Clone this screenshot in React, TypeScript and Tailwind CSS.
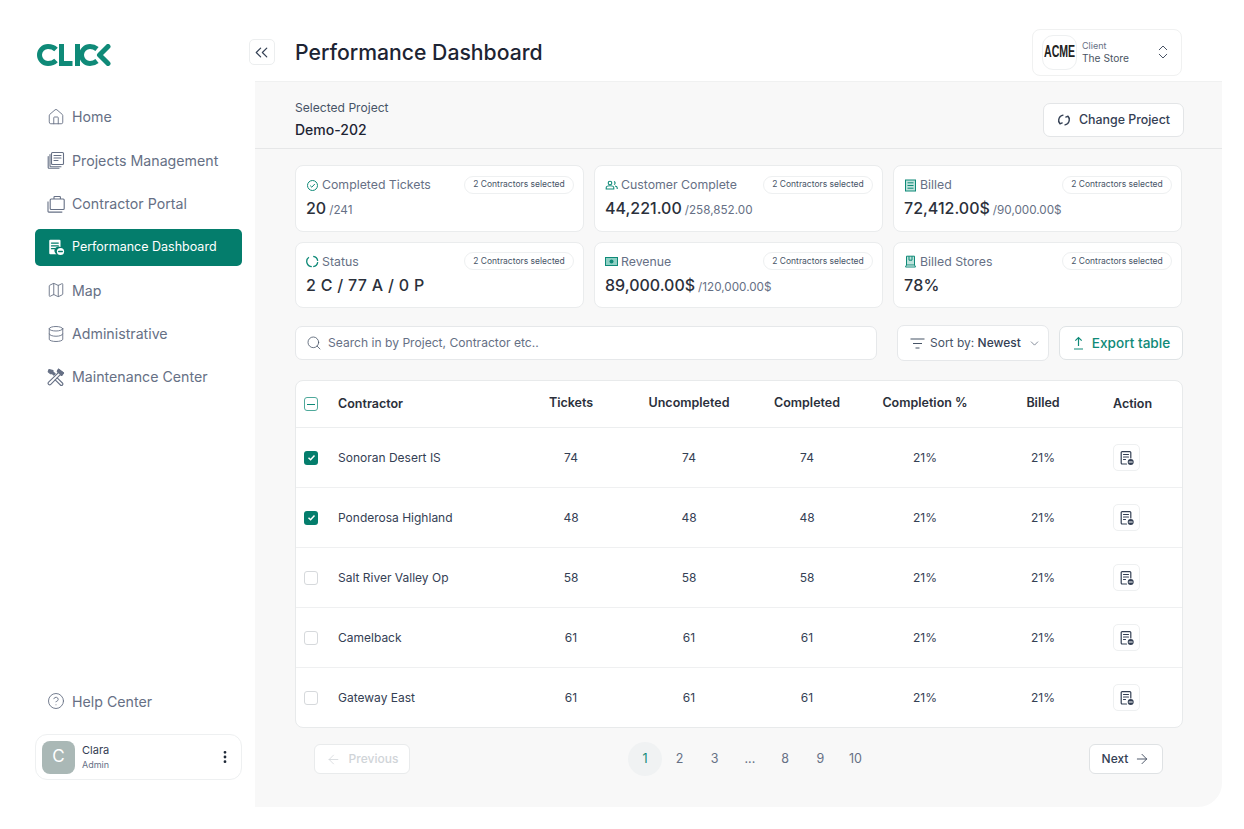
import { ChevronDown, ChevronsUpDown, ArrowLeft, ArrowRight, Search, House, Map, Database, CircleHelp, MoreVertical, ChevronsLeft } from 'lucide-react';
import type { ReactNode } from 'react';

const Doc = ({ size = 16, filled = false }: { size?: number; filled?: boolean }) => (
  <svg width={size} height={size} viewBox="0 0 16 16" fill="none" stroke="currentColor" strokeWidth={1.2} strokeLinecap="round">
    {filled ? (
      <>
        <path d="M2 2.5a1 1 0 0 1 1-1h8a1 1 0 0 1 1 1V8a3.5 3.5 0 0 0-3.5 6.5H3a1 1 0 0 1-1-1z" fill="currentColor" stroke="none" />
        <path d="M4 4.5h6M4 7h6M4 9.5h3" stroke="#047d6c" />
        <circle cx="12" cy="12" r="3.2" fill="currentColor" stroke="none" />
        <path d="M10.4 12h3.2" stroke="#047d6c" />
      </>
    ) : (
      <>
        <path d="M7.5 14H3.2a1 1 0 0 1-1-1V2.6a1 1 0 0 1 1-1h7.6a1 1 0 0 1 1 1V8" />
        <path d="M4.5 4.5h5M4.5 7h5M4.5 9.5h2" />
        <circle cx="11.7" cy="12" r="3" fill="currentColor" stroke="none" />
        <path d="M10.2 12h3" stroke="#fff" />
      </>
    )}
  </svg>
);

const Papers = () => (
  <svg width="18" height="18" viewBox="0 0 18 18" fill="none" stroke="currentColor" strokeWidth={1.1} strokeLinejoin="round" strokeLinecap="round">
    <rect x="4.5" y="1.5" width="12" height="12" rx="1" />
    <path d="M7 4.5h7M7 7h7M7 9.5h4" />
    <path d="M3 3.5v11.5a.8.8 0 0 0 .8.8H14" />
    <path d="M1.2 5.5v11a.8.8 0 0 0 .8.8h10" />
  </svg>
);

const Cases = () => (
  <svg width="18" height="18" viewBox="0 0 18 18" fill="none" stroke="currentColor" strokeWidth={1.1} strokeLinejoin="round">
    <rect x="3.2" y="4" width="14" height="10.5" rx="1" />
    <path d="M7 4V2.2a.7.7 0 0 1 .7-.7h5a.7.7 0 0 1 .7.7V4" />
    <path d="M1 6.5v9.8a.8.8 0 0 0 .8.8h13.5" />
  </svg>
);

const Tools = () => (
  <svg width="18" height="18" viewBox="0 0 18 18" fill="none" stroke="currentColor" strokeWidth={1.1} strokeLinejoin="round" strokeLinecap="round">
    <path d="M2 1.5 1.2 3.8l2.4 2 1.4-.4 1.8 1.8 1.4-1.4L6 4 6 2.6z" fill="currentColor" />
    <path d="M10.2 9.8l5.2 5.2a1.4 1.4 0 0 1-2 2l-5.2-5.2" />
    <path d="M11.5 1.2l5 3.8-1.8 2.4-1.4-.8L3.8 16.4a1.4 1.4 0 0 1-2.2-2.2l9.8-9.6-1.1-1.4z" />
    <path d="M11.5 1.2l5 3.8-1.8 2.4-3.3-2.8-1.1-1.4z" fill="currentColor" />
  </svg>
);

const nav: { label: string; icon: ReactNode; active?: boolean }[] = [
  { label: 'Home', icon: <House size={18} strokeWidth={1.2} /> },
  { label: 'Projects Management', icon: <Papers /> },
  { label: 'Contractor Portal', icon: <Cases /> },
  { label: 'Performance Dashboard', icon: <Doc filled size={18} />, active: true },
  { label: 'Map', icon: <Map size={18} strokeWidth={1.2} /> },
  { label: 'Administrative', icon: <Database size={18} strokeWidth={1.2} /> },
  { label: 'Maintenance Center', icon: <Tools /> },
];

const teal = '#0f8a78';

const statIcons: Record<string, ReactNode> = {
  check: (
    <svg width="13" height="13" viewBox="0 0 13 13" fill="none" stroke={teal} strokeWidth={1}>
      <circle cx="6.5" cy="6.5" r="5" />
      <path d="M4.2 6.6 5.8 8.2 8.8 5" />
    </svg>
  ),
  people: (
    <svg width="13" height="13" viewBox="0 0 13 13" fill="none" stroke={teal} strokeWidth={1.1}>
      <circle cx="5" cy="4" r="1.8" />
      <path d="M9 2.4a1.7 1.7 0 0 1 0 3.2M1.2 10v-1.2c0-1.2 1.4-2 3.8-2s3.8.8 3.8 2V10zM10 7c1.4.2 2.2.9 2.2 1.8V10" />
    </svg>
  ),
  ring: (
    <svg width="13" height="13" viewBox="0 0 13 13" fill="none" stroke={teal} strokeWidth={1.3}>
      <path d="M7.2 1.3a5.2 5.2 0 0 1 4.5 4.5M11.7 7.2a5.2 5.2 0 0 1-4.5 4.5M5.8 11.7a5.2 5.2 0 0 1-2.9-9.4" />
    </svg>
  ),
  cash: (
    <svg width="13" height="13" viewBox="0 0 13 13" fill="none">
      <rect x="0.5" y="2.5" width="12" height="8" fill="#8fd0c4" stroke={teal} />
      <circle cx="6.5" cy="6.5" r="2" fill={teal} />
    </svg>
  ),
  sheet: (
    <svg width="13" height="13" viewBox="0 0 13 13" fill="none" stroke={teal} strokeWidth={1}>
      <rect x="1.5" y="1" width="10" height="11" fill="#bfe3dc" />
      <path d="M3.5 3.8h6M3.5 6.5h6M3.5 9.2h6" />
    </svg>
  ),
  book: (
    <svg width="13" height="13" viewBox="0 0 13 13" fill="none" stroke={teal} strokeWidth={1}>
      <path d="M2.5 10V1.2h8V10z" fill="#bfe3dc" />
      <path d="M2.5 10 1.5 12h10l-1-2M5 1.2v4h3v-4" />
    </svg>
  ),
};

const stats = [
  { title: 'Completed Tickets', icon: 'check', value: '20', total: '/241' },
  { title: 'Customer Complete', icon: 'people', value: '44,221.00', total: '/258,852.00' },
  { title: 'Billed', icon: 'sheet', value: '72,412.00$', total: '/90,000.00$' },
  { title: 'Status', icon: 'ring', value: '2 C / 77 A / 0 P', total: '' },
  { title: 'Revenue', icon: 'cash', value: '89,000.00$', total: '/120,000.00$' },
  { title: 'Billed Stores', icon: 'book', value: '78%', total: '' },
];

const rows = [
  { name: 'Sonoran Desert IS', n: 74, checked: true },
  { name: 'Ponderosa Highland', n: 48, checked: true },
  { name: 'Salt River Valley Op', n: 58, checked: false },
  { name: 'Camelback', n: 61, checked: false },
  { name: 'Gateway East', n: 61, checked: false },
];

const cols = 'grid grid-cols-[42px_174px_118px_118px_118px_118px_118px_1fr] items-center';

export default function App() {
  return (
    <div className="w-[1244px] h-[829px] bg-white p-[22px] flex font-['Inter',sans-serif] overflow-hidden">
      <aside className="w-[233px] shrink-0 flex flex-col pl-[13px] pr-[13px] pb-[27px]">
        <svg width="75" height="22" viewBox="0 0 75 22" fill="none" stroke="#0f8a78" strokeWidth={5} className="mt-[22px] ml-[2px]">
          <path d="M19 5.5Q16 2.5 11 2.5a8.5 8.5 0 0 0 0 17q5 0 8-3" />
          <path d="M24.5 0v19.5h11" />
          <path d="M40.5 0v22" />
          <path d="M60 5Q57 2.5 53 2.5a8.5 8.5 0 0 0 0 17q4 0 7-2.5" />
          <path d="M71 2.5 62.5 11l8.5 8.5" strokeLinecap="round" strokeLinejoin="round" />
        </svg>
        <nav className="mt-[32.5px] flex flex-col gap-[6.35px]">
          {nav.map((item) => (
            <div
              key={item.label}
              className={`h-[37px] flex items-center rounded-[5px] pl-[12px] ${item.active ? 'bg-[#047d6c] text-white text-[12.5px]' : 'text-[#667085] text-[14.2px]'}`}
            >
              <span className="w-[25px] flex shrink-0">{item.icon}</span>
              {item.label}
            </div>
          ))}
        </nav>
        <div className="mt-auto flex items-center pl-[12px] text-[14.2px] text-[#667085]">
          <span className="w-[25px] flex shrink-0"><CircleHelp size={18} strokeWidth={1.2} /></span>
          Help Center
        </div>
        <div className="mt-[22px] h-[46px] border border-[#eef0f1] rounded-[12px] flex items-center pl-[6px] pr-[8px]">
          <div className="w-[33px] h-[33px] rounded-[8px] bg-[#aab8b6] text-white text-[17px] flex items-center justify-center">C</div>
          <div className="ml-[7px] flex-1 leading-none">
            <div className="text-[11px] text-[#344054]">Clara</div>
            <div className="text-[9px] text-[#667085] mt-[4px]">Admin</div>
          </div>
          <MoreVertical size={16} className="text-[#1f2937]" strokeWidth={2.2} />
        </div>
      </aside>

      <main className="flex-1 relative bg-[#f8f8f8] rounded-br-[24px] flex flex-col">
        <button className="absolute left-[-6px] top-[17px] w-[26px] h-[26px] bg-white border border-[#eceeef] rounded-[5px] flex items-center justify-center text-[#344054]">
          <ChevronsLeft size={21} strokeWidth={1.4} className="-ml-[1px]" />
        </button>

        <header className="h-[60px] bg-white border-b border-[#f0f1f1] flex items-center pl-[40px] pr-[40px] justify-between shrink-0">
          <h1 className="text-[21.2px] font-medium text-[#1d2433] mt-[3px]">Performance Dashboard</h1>
          <div className="w-[150px] h-[47px] mt-[1px] border border-[#f0f1f1] rounded-[8px] flex items-center pl-[9px] pr-[9px]">
            <div className="w-[35px] h-[35px] shrink-0 rounded-[11px] border border-[#eef0f1] flex items-center justify-center overflow-hidden">
              <span className="font-['Liberation_Sans',sans-serif] font-bold text-[16px] scale-x-[0.66] text-[#222]">ACME</span>
            </div>
            <div className="ml-[5px] flex-1 leading-none">
              <div className="text-[9px] text-[#667085]">Client</div>
              <div className="text-[10.2px] text-[#4b5563] mt-[3px]">The Store</div>
            </div>
            <ChevronsUpDown size={18} strokeWidth={1.2} className="text-[#344054] -ml-[1px]" />
          </div>
        </header>

        <section className="h-[67px] pt-[9px] border-b border-[#e6e7e8] flex items-center justify-between pl-[40px] pr-[38px] shrink-0">
          <div>
            <div className="text-[12.1px] text-[#475467]">Selected Project</div>
            <div className="text-[14px] font-medium text-[#1d2433] mt-[2px]">Demo-202</div>
          </div>
          <button className="w-[141px] h-[34px] pt-[1px] bg-white border border-[#e3e5e7] rounded-[7px] flex items-center justify-center gap-[8px] text-[12.4px] font-medium text-[#344054]">
            <svg width="14" height="14" viewBox="0 0 14 14" fill="none" stroke="currentColor" strokeWidth={1.3} strokeLinecap="round" strokeLinejoin="round">
              <path d="M6 2.2A5 5 0 0 0 3 10.5M1.6 8.6 3 10.8l2.2-.9M8 11.8a5 5 0 0 0 3-8.3M12.4 5.4 11 3.2l-2.2.9" />
            </svg>
            Change Project
          </button>
        </section>

        <section className="pl-[40px] pr-[40px] pt-[16px] grid grid-cols-3 gap-x-[10px] gap-y-[10px]">
          {stats.map((s) => (
            <div key={s.title} className="h-[66.5px] bg-white border border-[#eaeced] rounded-[8px] pl-[10px] pr-[9px] pt-[9px]">
              <div className="flex items-center justify-between">
                <div className="flex items-center gap-[3px] mt-[1px] text-[12.3px] text-[#667085]">
                  <span className="w-[13px] h-[13px] flex">{statIcons[s.icon]}</span>
                  {s.title}
                </div>
                <span className="h-[18px] w-[110px] rounded-full border border-[#eef0f1] flex items-center justify-center text-[8.5px] text-[#475467]">2 Contractors selected</span>
              </div>
              <div className="mt-[2px] flex items-baseline text-[#2b303b]">
                <span className={`text-[16px] font-medium ${s.total ? '' : 'tracking-[0.3px]'}`}>{s.value}</span>
                {s.total && <span className="text-[11.7px] text-[#667085] ml-[3px]">{s.total}</span>}
              </div>
            </div>
          ))}
        </section>

        <section className="pl-[40px] pr-[39px] mt-[17px] flex items-center">
          <div className="w-[582px] h-[34px] bg-white border border-[#e6e8ea] rounded-[7px] flex items-center pl-[10px] gap-[6px] text-[12.1px] text-[#667085]">
            <Search size={16} strokeWidth={1.2} className="text-[#475467]" />
            Search in by Project, Contractor etc..
          </div>
          <div className="ml-[20px] w-[152px] h-[36px] bg-white border border-[#e6e8ea] rounded-[7px] flex items-center pl-[12px] text-[12px] text-[#475467]">
            <svg width="15" height="11" viewBox="0 0 15 11" stroke="currentColor" strokeWidth={1.1} className="mr-[5px]">
              <path d="M.5 1h14M3 5.5h9M5.5 10h4" />
            </svg>
            Sort by:&nbsp;<span className="text-[#344054] font-medium">Newest</span>
            <ChevronDown size={13} strokeWidth={1.2} className="ml-[7px]" />
          </div>
          <button className="ml-[10px] w-[124px] h-[34px] bg-white border border-[#dfe3e5] rounded-[7px] flex items-center justify-center gap-[7px] text-[13.6px] font-medium text-[#0f8a78]">
            <svg width="13" height="14" viewBox="0 0 13 14" fill="none" stroke="currentColor" strokeWidth={1.2}>
              <path d="M6.5 10V1.5M3.3 4.7l3.2-3.2 3.2 3.2M2 13h9" />
            </svg>
            Export table
          </button>
        </section>

        <section className="ml-[40px] mr-[39px] mt-[19px] bg-white border border-[#e8eaeb] rounded-[8px] text-[#344054]">
          <div className={`${cols} h-[47px] border-b border-[#eceeef] text-[12.5px] font-semibold text-[#2b303b]`}>
            <span className="pl-[8px] flex">
              <span className="w-[14px] h-[14px] rounded-[3px] border border-[#4fa99b] flex items-center justify-center">
                <span className="w-[8px] h-px bg-[#0f8a78]" />
              </span>
            </span>
            <span className="mt-[1px]">Contractor</span>
            <span className="text-center -mt-[1px]">Tickets</span>
            <span className="text-center -mt-[1px]">Uncompleted</span>
            <span className="text-center -mt-[1px]">Completed</span>
            <span className="text-center -mt-[1px]">Completion %</span>
            <span className="text-center -mt-[1px]">Billed</span>
            <span className="pl-[11px] mt-[1px]">Action</span>
          </div>
          {rows.map((r, i) => (
            <div key={r.name} className={`${cols} text-[12px] ${i < rows.length - 1 ? 'h-[60px] border-b border-[#eff0f1]' : 'h-[59px]'}`}>
              <span className="pl-[8px] flex">
                {r.checked ? (
                  <span className="w-[14px] h-[14px] rounded-[3px] bg-[#047d6c] flex items-center justify-center">
                    <svg width="9" height="9" viewBox="0 0 9 9" fill="none" stroke="#fff" strokeWidth={1.5}>
                      <path d="M1.5 4.8 3.6 6.8 7.5 2.5" />
                    </svg>
                  </span>
                ) : (
                  <span className="w-[14px] h-[14px] rounded-[3px] border border-[#d6d9dc]" />
                )}
              </span>
              <span>{r.name}</span>
              <span className="text-center">{r.n}</span>
              <span className="text-center">{r.n}</span>
              <span className="text-center">{r.n}</span>
              <span className="text-center">21%</span>
              <span className="text-center">21%</span>
              <span className="pl-[11px]">
                <span className="w-[27px] h-[27px] border border-[#eef0f1] rounded-[5px] flex items-center justify-center text-[#344054]">
                  <Doc size={16} />
                </span>
              </span>
            </div>
          ))}
        </section>

        <section className="ml-[59px] mr-[59px] mt-[14px] flex items-center justify-between">
          <button className="w-[96px] h-[30px] border border-[#e9ebec] bg-white rounded-[6px] flex items-center justify-center gap-[8px] text-[12px] font-medium text-[#d0d4d8]">
            <ArrowLeft size={15} strokeWidth={1.2} />
            Previous
          </button>
          <div className="flex items-center text-[12.5px] text-[#667085] ml-[2px]">
            <span className="w-[34px] h-[34px] rounded-full bg-[#f0f2f3] text-[#0f8a78] flex items-center justify-center">1</span>
            {['2', '3', '...', '8', '9', '10'].map((p) => (
              <span key={p} className="w-[35.2px] text-center">{p}</span>
            ))}
          </div>
          <button className="w-[74px] h-[30px] border border-[#dfe2e4] bg-white rounded-[6px] flex items-center justify-center gap-[6px] text-[12px] font-medium text-[#344054]">
            Next
            <ArrowRight size={16} strokeWidth={1.3} />
          </button>
        </section>
      </main>
    </div>
  );
}
